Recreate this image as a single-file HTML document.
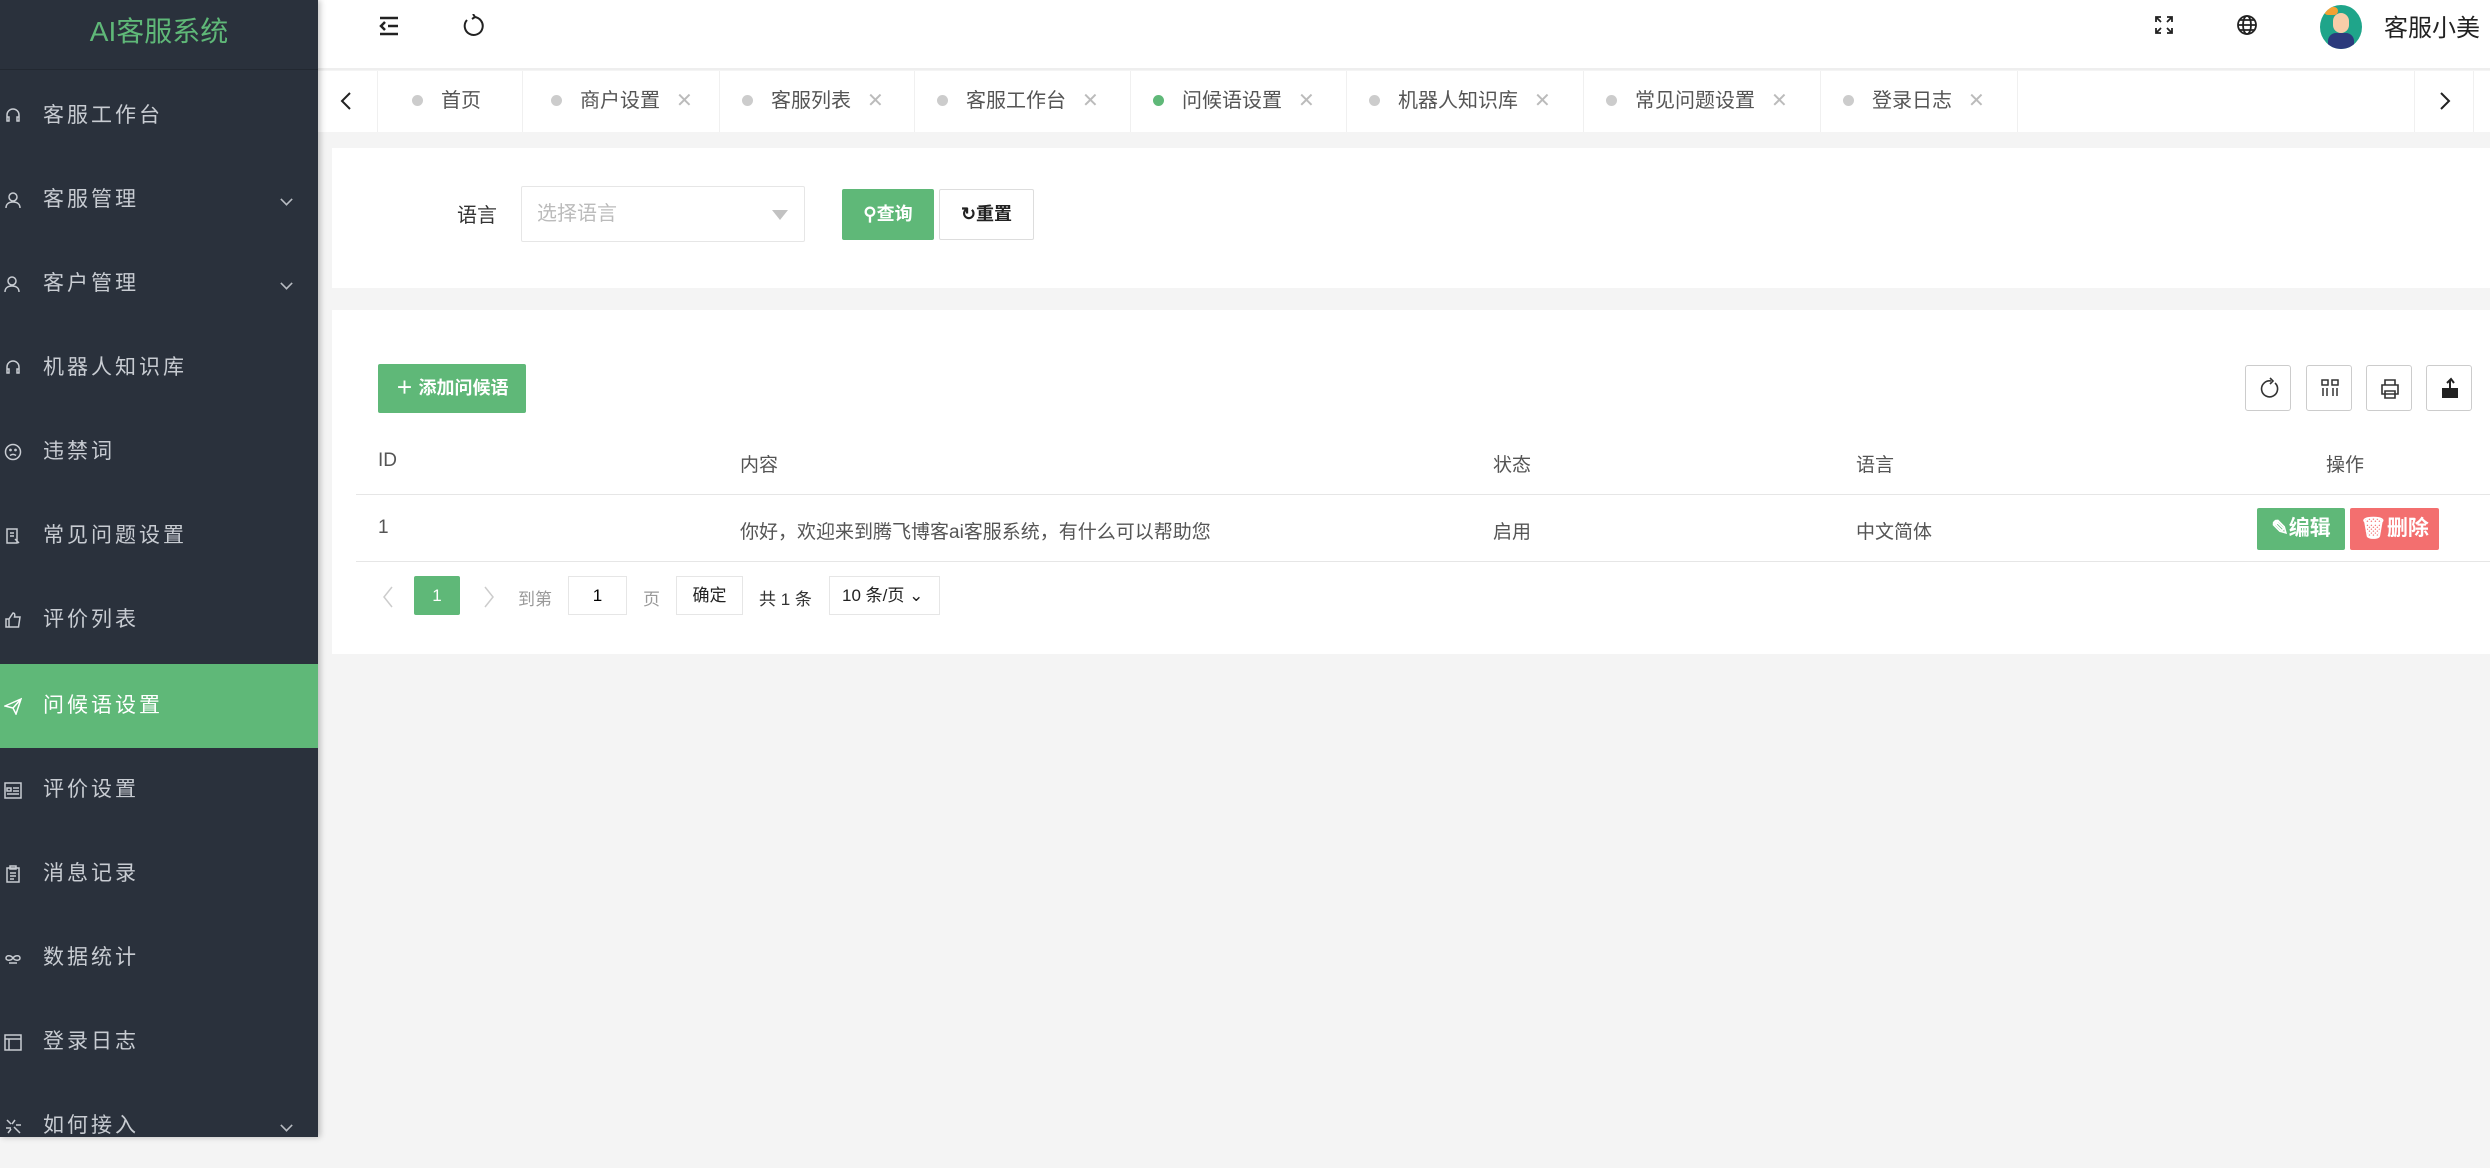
<!DOCTYPE html>
<html><head><meta charset="utf-8"><style>
*{margin:0;padding:0;box-sizing:border-box}
body{width:2490px;height:1137px;overflow:hidden;background:#f4f4f4;font-family:"Liberation Sans","Noto Sans CJK SC",sans-serif;position:relative}
.a{position:absolute}
#side{left:0;top:0;width:318px;height:1137px;background:#2a313c;box-shadow:2px 0 6px rgba(0,0,0,.25);z-index:2}
.logo{left:0;top:0;width:318px;height:70px;border-bottom:1px solid #222831;color:#5fb878;font-size:28px;text-align:center;line-height:64px}
.mi{left:0;width:318px;height:84px;color:#c8ccd2;font-size:21px;letter-spacing:3px;line-height:84px;padding-left:43px}
.mi.on{background:#5fb878;color:#fff}
.ic{position:absolute;left:4px;top:33px;width:18px;height:18px}
.chev{position:absolute;right:26px;top:36px;width:11px;height:11px;border-right:2px solid #b8bcc2;border-bottom:2px solid #b8bcc2;transform:rotate(45deg) scale(.8)}
#hdr{left:318px;top:0;width:2172px;height:70px;background:#fff;border-bottom:2px solid #eee}
#tabs{left:318px;top:71px;width:2172px;height:61px;background:#fff}
.tab{top:0;height:61px;border-right:1px solid #f0f0f0;font-size:20px;color:#555;line-height:61px}
.dot{display:inline-block;width:11px;height:11px;border-radius:50%;background:#ccc;margin-right:18px;vertical-align:1px}
.x{color:#bbb;margin-left:16px;font-size:20px}
.card{background:#fff;left:332px;width:2158px}
.btn{font-size:18px;text-align:center;border-radius:2px}
.th{font-size:19px;color:#555;top:450px}
.td{font-size:19px;color:#555;top:517px}
.tb{width:46px;height:46px;border:1px solid #ccc;border-radius:3px;top:365px;background:#fff}
.pg{font-size:17px;color:#333;top:584px}
</style></head><body>
<div id="side" class="a">
<div class="logo a">AI客服系统</div>
<div class="mi a" style="top:74px"><svg class="ic" viewBox="0 0 18 18" fill="none" stroke="#c8ccd2" stroke-width="1.5"><path d="M3 11V8a6 6 0 0112 0v3M3 10h2v4H3zM13 10h2v4h-2z"/></svg>客服工作台</div>
<div class="mi a" style="top:158px"><svg class="ic" viewBox="0 0 18 18" fill="none" stroke="#c8ccd2" stroke-width="1.5"><circle cx="9" cy="6" r="4"/><path d="M2 17c0-4 3-6 7-6s7 2 7 6"/></svg>客服管理<span class="chev"></span></div>
<div class="mi a" style="top:242px"><svg class="ic" viewBox="0 0 18 18" fill="none" stroke="#c8ccd2" stroke-width="1.5"><circle cx="8" cy="6" r="4"/><path d="M1 17c0-4 3-6 7-6s7 2 7 6"/></svg>客户管理<span class="chev"></span></div>
<div class="mi a" style="top:326px"><svg class="ic" viewBox="0 0 18 18" fill="none" stroke="#c8ccd2" stroke-width="1.5"><path d="M3 11V8a6 6 0 0112 0v3M3 10h2v4H3zM13 10h2v4h-2z"/></svg>机器人知识库</div>
<div class="mi a" style="top:410px"><svg class="ic" viewBox="0 0 18 18" fill="none" stroke="#c8ccd2" stroke-width="1.5"><circle cx="9" cy="9" r="7.5"/><path d="M6 12.5c2-1.5 4-1.5 6 0"/><circle cx="6.5" cy="7" r=".6"/><circle cx="11.5" cy="7" r=".6"/></svg>违禁词</div>
<div class="mi a" style="top:494px"><svg class="ic" viewBox="0 0 18 18" fill="none" stroke="#c8ccd2" stroke-width="1.5"><path d="M3 2h10v14H3zM6 6h4M6 9h4M11 12l4 4"/></svg>常见问题设置</div>
<div class="mi a" style="top:578px"><svg class="ic" viewBox="0 0 18 18" fill="none" stroke="#c8ccd2" stroke-width="1.5"><path d="M2 8h3v8H2zM5 8l4-6c2 0 2 2 1.5 4H16l-1.5 10H5"/></svg>评价列表</div>
<div class="mi a on" style="top:664px"><svg class="ic" viewBox="0 0 18 18" fill="none" stroke="#fff" stroke-width="1.5"><path d="M1 9l16-7-5 15-3-6z M9 11l8-9"/></svg>问候语设置</div>
<div class="mi a" style="top:748px"><svg class="ic" viewBox="0 0 18 18" fill="none" stroke="#c8ccd2" stroke-width="1.5"><path d="M1 2h16v15H1zM3 7h4v3H3zM9 7h6M9 10h6M3 13h12"/></svg>评价设置</div>
<div class="mi a" style="top:832px"><svg class="ic" viewBox="0 0 18 18" fill="none" stroke="#c8ccd2" stroke-width="1.5"><path d="M3 3h12v14H3zM6 1h6v3H6zM6 8h6M6 11h6M6 14h4"/></svg>消息记录</div>
<div class="mi a" style="top:916px"><svg class="ic" viewBox="0 0 18 18" fill="none" stroke="#c8ccd2" stroke-width="1.5"><path d="M9 9c-2-3-7-3-7 0s5 3 7 0 7-3 7 0-5 3-7 0M5 14h8"/></svg>数据统计</div>
<div class="mi a" style="top:1000px"><svg class="ic" viewBox="0 0 18 18" fill="none" stroke="#c8ccd2" stroke-width="1.5"><path d="M1 2h16v15H1zM1 6h16M5 6v11"/></svg>登录日志</div>
<div class="mi a" style="top:1084px"><svg class="ic" viewBox="0 0 18 18" fill="none" stroke="#c8ccd2" stroke-width="1.5"><path d="M3 3l4 4M11 3l-3 4M2 11h5M10 10l6 6M12 8h5M4 16l3-4"/></svg>如何接入<span class="chev"></span></div>
</div>

<div id="hdr" class="a">
<svg class="a" style="left:60px;top:16px" width="22" height="20" viewBox="0 0 22 20" fill="none" stroke="#222" stroke-width="2.5"><path d="M2 2h18M10 10h10M2 18h18M7 6l-4 4 4 4"/></svg>
<svg class="a" style="left:142px;top:14px" width="24" height="24" viewBox="0 0 24 24" fill="none" stroke="#222" stroke-width="2"><path d="M14 3a9 9 0 11-7 3"/><path d="M13 0l2 3-3 2"/></svg>
<svg class="a" style="left:1836px;top:15px" width="20" height="20" viewBox="0 0 20 20" fill="none" stroke="#222" stroke-width="1.8"><path d="M2 7V2h5M13 2h5v5M18 13v5h-5M7 18H2v-5M2 2l5 5M18 2l-5 5M18 18l-5-5M2 18l5-5"/></svg>
<svg class="a" style="left:1918px;top:14px" width="22" height="22" viewBox="0 0 22 22" fill="none" stroke="#222" stroke-width="1.8"><circle cx="11" cy="11" r="9"/><ellipse cx="11" cy="11" rx="4" ry="9"/><path d="M2 11h18M4 6h14M4 16h14"/></svg>
<div class="a" style="left:2002px;top:5px;width:42px;height:44px;border-radius:50%;background:#1fa58a;overflow:hidden"><div class="a" style="left:13px;top:8px;width:16px;height:20px;border-radius:8px;background:#f6cda8"></div><div class="a" style="left:8px;top:28px;width:26px;height:18px;background:#2b3a7c;border-radius:8px 8px 0 0"></div><div class="a" style="left:4px;top:2px;width:14px;height:8px;background:#f3a132;border-radius:4px"></div></div>
<div class="a" style="left:2066px;top:8px;font-size:24px;color:#222">客服小美</div>
</div>

<div id="tabs" class="a">
<div class="a" style="left:0;top:0;width:60px;height:61px;border-right:1px solid #f0f0f0"><svg class="a" style="left:22px;top:20px" width="12" height="20" viewBox="0 0 12 20" fill="none" stroke="#222" stroke-width="2"><path d="M10 2L2 10l8 8"/></svg></div>
<div class="tab a" style="left:60px;width:145px;padding-left:34px"><span class="dot"></span>首页</div>
<div class="tab a" style="left:205px;width:197px;padding-left:28px"><span class="dot"></span>商户设置<span class="x">✕</span></div>
<div class="tab a" style="left:402px;width:195px;padding-left:22px"><span class="dot"></span>客服列表<span class="x">✕</span></div>
<div class="tab a" style="left:597px;width:216px;padding-left:22px"><span class="dot"></span>客服工作台<span class="x">✕</span></div>
<div class="tab a" style="left:813px;width:216px;padding-left:22px"><span class="dot" style="background:#5fb878"></span>问候语设置<span class="x">✕</span></div>
<div class="tab a" style="left:1029px;width:237px;padding-left:22px"><span class="dot"></span>机器人知识库<span class="x">✕</span></div>
<div class="tab a" style="left:1266px;width:237px;padding-left:22px"><span class="dot"></span>常见问题设置<span class="x">✕</span></div>
<div class="tab a" style="left:1503px;width:197px;padding-left:22px"><span class="dot"></span>登录日志<span class="x">✕</span></div>
<div class="a" style="left:2096px;top:0;width:60px;height:61px;border-left:1px solid #f0f0f0;border-right:1px solid #f0f0f0"><svg class="a" style="left:24px;top:20px" width="12" height="20" viewBox="0 0 12 20" fill="none" stroke="#222" stroke-width="2"><path d="M2 2l8 8-8 8"/></svg></div>
</div>

<div class="card a" style="top:148px;height:140px">
<div class="a" style="left:125px;top:51px;font-size:20px;color:#333">语言</div>
<div class="a" style="left:189px;top:38px;width:284px;height:56px;border:1px solid #e6e6e6;border-radius:2px;font-size:20px;color:#bbb;line-height:54px;padding-left:15px">选择语言<span class="a" style="right:16px;top:23px;border:8px solid transparent;border-top:10px solid #c2c2c2;border-bottom:0"></span></div>
<div class="btn a" style="left:510px;top:41px;width:92px;height:51px;background:#5fb878;color:#fff;line-height:51px;font-weight:bold">⚲查询</div>
<div class="btn a" style="left:607px;top:41px;width:95px;height:51px;border:1px solid #ddd;color:#222;line-height:49px;font-weight:bold">↻重置</div>
</div>

<div class="card a" style="top:310px;height:344px">
<div class="btn a" style="left:46px;top:54px;width:148px;height:49px;background:#5fb878;color:#fff;line-height:49px;font-weight:bold">＋ 添加问候语</div>
<div class="tb a" style="left:1913px;top:55px"><svg class="a" style="left:12px;top:11px" width="22" height="24" viewBox="0 0 22 24" fill="none" stroke="#333" stroke-width="1.6"><path d="M17 6a8 8 0 11-4-2"/><path d="M12 1l3 3-3 3"/></svg></div>
<div class="tb a" style="left:1974px;top:55px"><svg class="a" style="left:13px;top:12px" width="20" height="20" viewBox="0 0 20 20" fill="none" stroke="#333" stroke-width="1.5"><path d="M2 2h6v5H2zM12 2h6v5h-6zM3 10v8M7 10v8M13 10v8M17 10v8"/></svg></div>
<div class="tb a" style="left:2034px;top:55px"><svg class="a" style="left:12px;top:12px" width="22" height="22" viewBox="0 0 22 22" fill="none" stroke="#333" stroke-width="1.6"><path d="M6 7V2h10v5M3 7h16v9H3zM6 13h10v7H6z"/></svg></div>
<div class="tb a" style="left:2094px;top:55px"><svg class="a" style="left:12px;top:10px" width="22" height="24" viewBox="0 0 22 24"><path d="M3 12h16v10H3z" fill="#222"/><path d="M11 12V4M8 7l4-4 3 4" stroke="#222" stroke-width="2" fill="none"/></svg></div>
<div class="th a" style="left:46px;top:140px">ID</div>
<div class="th a" style="left:408px;top:140px">内容</div>
<div class="th a" style="left:1161px;top:140px">状态</div>
<div class="th a" style="left:1524px;top:140px">语言</div>
<div class="th a" style="left:1994px;top:140px">操作</div>
<div class="a" style="left:24px;top:184px;width:2134px;height:1px;background:#e6e6e6"></div>
<div class="td a" style="left:46px;top:207px">1</div>
<div class="td a" style="left:408px;top:207px">你好，欢迎来到腾飞博客ai客服系统，有什么可以帮助您</div>
<div class="td a" style="left:1161px;top:207px">启用</div>
<div class="td a" style="left:1524px;top:207px">中文简体</div>
<div class="btn a" style="left:1925px;top:198px;width:88px;height:42px;background:#5fb878;color:#fff;line-height:42px;font-size:21px;font-weight:bold">✎编辑</div>
<div class="btn a" style="left:2018px;top:198px;width:89px;height:42px;background:#f36f6f;color:#fff;line-height:42px;font-size:21px;font-weight:bold">🗑删除</div>
<div class="a" style="left:24px;top:251px;width:2134px;height:1px;background:#e6e6e6"></div>
<svg class="a" style="left:50px;top:276px" width="12" height="22" viewBox="0 0 12 22" fill="none" stroke="#ccc" stroke-width="1.5"><path d="M10 1L2 11l8 10"/></svg>
<div class="a" style="left:82px;top:266px;width:46px;height:39px;background:#5fb878;color:#fff;font-size:17px;text-align:center;line-height:39px;border-radius:2px">1</div>
<svg class="a" style="left:151px;top:276px" width="12" height="22" viewBox="0 0 12 22" fill="none" stroke="#ccc" stroke-width="1.5"><path d="M2 1l8 10-8 10"/></svg>
<div class="pg a" style="left:186px;top:275px;color:#999">到第</div>
<div class="a" style="left:236px;top:266px;width:59px;height:39px;border:1px solid #e6e6e6;font-size:17px;text-align:center;line-height:37px">1</div>
<div class="pg a" style="left:311px;top:275px;color:#999">页</div>
<div class="a" style="left:344px;top:266px;width:67px;height:39px;border:1px solid #e6e6e6;font-size:17px;text-align:center;line-height:37px;color:#222">确定</div>
<div class="pg a" style="left:427px;top:275px">共 1 条</div>
<div class="a" style="left:497px;top:266px;width:111px;height:39px;border:1px solid #e6e6e6;font-size:17px;line-height:37px;padding-left:12px;color:#222">10 条/页 ⌄</div>
</div>
</body></html>
